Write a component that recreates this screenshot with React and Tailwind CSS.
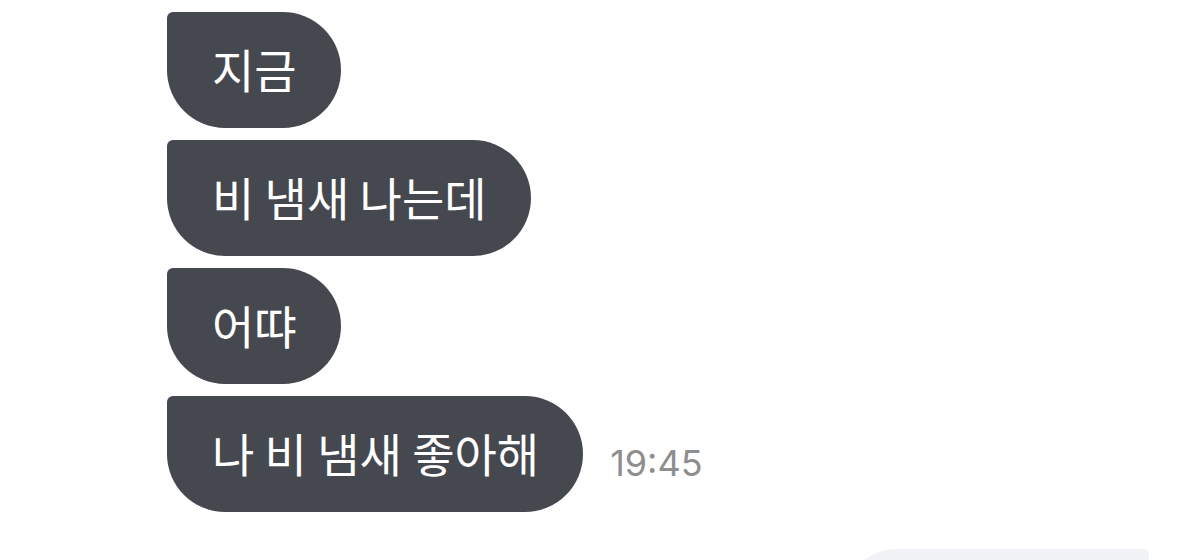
const messages = [
  { id: 1, text: '지금' },
  { id: 2, text: '비 냄새 나는데' },
  { id: 3, text: '어땨' },
  { id: 4, text: '나 비 냄새 좋아해', time: '19:45' },
];

export default function App() {
  return (
    <main className="h-screen overflow-hidden bg-white pt-3 pr-[51px] pl-[167px]">
      <ul className="flex flex-col gap-3">
        {messages.map((message) => (
          <Message key={message.id} text={message.text} time={message.time} />
        ))}
      </ul>
      {/* start of the reply, cut off by the bottom of the window */}
      <div className="mt-[37px] ml-auto h-[116px] w-[309px] rounded-[58px] rounded-tr-md bg-[#f1f2f5]" />
    </main>
  );
}

function Message({ text, time }) {
  return (
    <li className="flex items-end gap-[27px]">
      <p className="rounded-[58px] rounded-tl-md bg-[#45484f] pt-[22px] pr-11 pb-[26px] pl-[45px] font-['Noto_Sans_CJK_KR',sans-serif] text-[46px] leading-[68px] whitespace-nowrap text-white">
        {text}
      </p>
      {time && (
        <time className="pb-[27px] font-['Inter',sans-serif] text-4xl leading-[44px] text-[#8e8e8e]">{time}</time>
      )}
    </li>
  );
}
